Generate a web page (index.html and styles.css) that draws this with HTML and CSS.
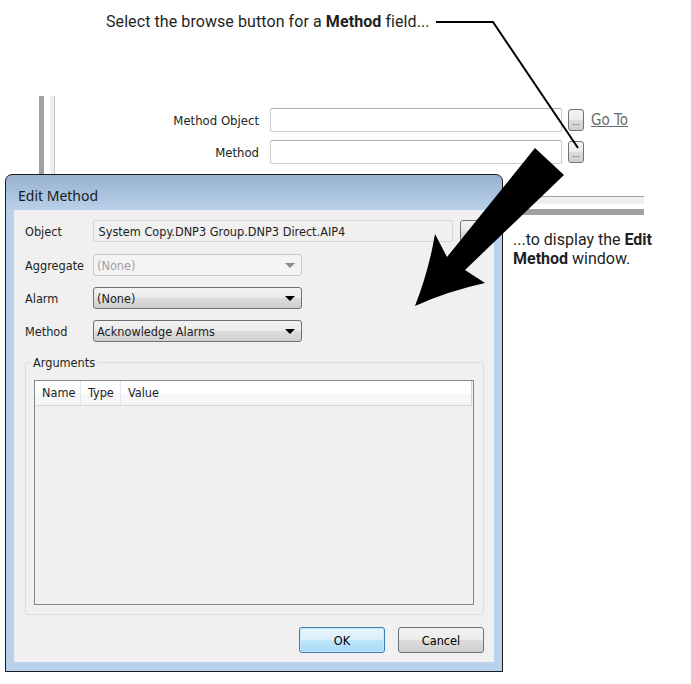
FILE: index.html
```html
<!DOCTYPE html>
<html lang="en">
<head>
    <meta charset="UTF-8">
    <meta name="viewport" content="width=device-width, initial-scale=1.0">
    <title>Edit Method</title>
    <link rel="stylesheet" href="styles.css">
</head>
<body>
    <p class="note note-top">Select the browse button for a <strong>Method</strong> field...</p>

    <!-- host window behind the dialog -->
    <div class="host">
        <div class="rail"></div>
        <div class="rail rail-light"></div>
        <div class="host-main">
            <div class="host-form">
                <label class="host-label">Method Object</label>
                <span class="host-input"></span>
                <button class="dots">...</button>
                <a class="goto" href="#">Go To</a>

                <label class="host-label">Method</label>
                <span class="host-input"></span>
                <button class="dots">...</button>
                <span></span>
            </div>
            <div class="host-bands"></div>
        </div>
    </div>

    <p class="note note-side">...to display the <strong>Edit</strong><br><strong>Method</strong> window.</p>

    <!-- Edit Method dialog -->
    <div class="dialog">
        <div class="dialog-title">Edit Method</div>
        <div class="dialog-body">
            <div class="row row-first">
                <span class="row-label">Object</span>
                <span class="textbox">System Copy.DNP3 Group.DNP3 Direct.AIP4</span>
                <button class="browse"></button>
            </div>
            <div class="row">
                <span class="row-label">Aggregate</span>
                <span class="combo combo-disabled">(None)</span>
            </div>
            <div class="row">
                <span class="row-label">Alarm</span>
                <span class="combo">(None)</span>
            </div>
            <div class="row">
                <span class="row-label">Method</span>
                <span class="combo">Acknowledge Alarms</span>
            </div>

            <fieldset class="group">
                <legend>Arguments</legend>
                <div class="list">
                    <div class="list-head">
                        <span class="col col-name">Name</span>
                        <span class="col col-type">Type</span>
                        <span class="col col-value">Value</span>
                    </div>
                </div>
            </fieldset>

            <div class="actions">
                <button class="btn btn-default">OK</button>
                <button class="btn">Cancel</button>
            </div>
        </div>
    </div>

    <!-- callout line and arrow -->
    <svg class="overlay" width="691" height="684" viewBox="0 0 691 684">
        <polyline points="436,22 493,22 578,148" fill="none" stroke="#000" stroke-width="2"/>
        <path d="M535 148 L564 175 L465 270 L485 283 Q448 291 415 306 Q429 270 435 234 L447 257 Z" fill="#000"/>
    </svg>
</body>
</html>
```

FILE: styles.css
```css
body {
    margin: 0;
    width: 691px;
    height: 684px;
    position: relative;
    overflow: hidden;
    background: #ffffff;
    font-family: Roboto, "Liberation Sans", sans-serif;
    color: #1f1f1f;
}

/* Annotations */
.note {
    margin: 0;
    font-size: 16px;
    line-height: 19px;
}

.note strong {
    font-weight: 700;
}

.note-top {
    padding: 12px 0 0 106px;
    letter-spacing: 0.08px;
}

.note-side {
    margin: 15px 0 0 513px;
    width: 160px;
}

.overlay {
    position: absolute;
    left: 0;
    top: 0;
    pointer-events: none;
}

/* Host window */
.host {
    display: flex;
    margin: 65px 0 0 39px;
    width: 605px;
}

.rail {
    width: 5px;
    margin-right: 6px;
    background: #a0a0a0;
}

.rail-light {
    width: 4px;
    margin-right: 0;
    background: #eeeeee;
    border-right: 1px solid #c8c8c8;
}

.host-main {
    flex: 1;
}

.host-form {
    display: grid;
    grid-template-columns: 215px 292px 22px auto;
    justify-content: start;
    grid-auto-rows: 24px;
    row-gap: 8px;
    align-items: center;
    justify-items: start;
    padding-top: 12px;
    margin-bottom: 32px;
    font-family: "DejaVu Sans Condensed", Tahoma, "Liberation Sans", sans-serif;
    font-size: 13px;
    color: #222;
}

.host-label {
    justify-self: stretch;
    text-align: right;
    padding-right: 11px;
}

.host-input {
    width: 292px;
    height: 24px;
    box-sizing: border-box;
    border: 1px solid #cccccc;
    border-top-color: #b0b0b0;
    border-radius: 2px;
    background: #fff;
}

.dots {
    width: 16px;
    height: 22px;
    margin-left: 6px;
    padding: 0 0 3px;
    display: flex;
    align-items: flex-end;
    justify-content: center;
    border: 1px solid #707070;
    border-radius: 3px;
    background: linear-gradient(#f2f2f2, #ebebeb 50%, #dddddd 50%, #cfcfcf);
    font-size: 9px;
    line-height: 9px;
    color: #4a2a8a;
}

.goto {
    margin-left: 7px;
    color: #6b6b6b;
    font-size: 15px;
}

.host-bands {
    height: 18px;
    border-top: 1px solid #a0a0a0;
    background: linear-gradient(#efefef 0, #efefef 7px, #fff 7px, #fff 12px, #a0a0a0 12px);
}

/* Dialog */
.dialog {
    position: absolute;
    left: 5px;
    top: 174px;
    width: 480px;
    padding: 0 8px 9px;
    border: 1px solid #1c1c1c;
    border-radius: 7px 7px 0 0;
    background: linear-gradient(#98b2cf, #b9d1ea 36px);
    font-family: "DejaVu Sans Condensed", Tahoma, "Liberation Sans", sans-serif;
    font-size: 12.6px;
    color: #1e1e1e;
}

.dialog-title {
    height: 35px;
    box-sizing: border-box;
    padding: 6px 0 0 4px;
    display: flex;
    align-items: center;
    font-family: "Noto Sans", "Open Sans", sans-serif;
    font-size: 14px;
    color: #1a1a1a;
}

.dialog-body {
    height: 452px;
    box-sizing: border-box;
    padding: 10px 10px 9px 11px;
    background: #f0f0f0;
    display: flex;
    flex-direction: column;
}

.row {
    display: flex;
    align-items: center;
    height: 22px;
    margin-bottom: 11px;
}

.row-first {
    margin-bottom: 12px;
}

.row:nth-child(4) {
    margin-bottom: 0;
}

.row-label {
    width: 68px;
}

.textbox {
    width: 363px;
    height: 22px;
    box-sizing: border-box;
    padding-left: 5px;
    display: flex;
    align-items: center;
    border: 1px solid #d6d6d6;
    border-radius: 2px;
    background: #f0f0f0;
}

.browse {
    width: 24px;
    height: 22px;
    margin-left: 7px;
    border: 1px solid #707070;
    border-radius: 3px;
    background: linear-gradient(#f2f2f2, #ebebeb 50%, #dddddd 50%, #cfcfcf);
}

.combo {
    width: 209px;
    height: 22px;
    box-sizing: border-box;
    padding: 0 6px 0 3px;
    display: flex;
    align-items: center;
    justify-content: space-between;
    border: 1px solid #707070;
    border-radius: 3px;
    background: linear-gradient(#f2f2f2, #ebebeb 50%, #dddddd 50%, #cfcfcf);
}

.combo::after {
    content: "";
    border-left: 5px solid transparent;
    border-right: 5px solid transparent;
    border-top: 5px solid #000;
}

.combo-disabled {
    color: #a0a0a0;
    border-color: #c9c9c9;
    background: #f4f4f4;
}

.combo-disabled::after {
    border-top-color: #8a8a8a;
}

.group {
    margin: 13px 0 0;
    padding: 10px 9px 9px 8px;
    min-width: 0;
    border: 1px solid #d5dfe5;
    border-radius: 3px;
}

.group legend {
    margin-left: -3px;
    padding: 0 2px;
    line-height: 15px;
}

.list {
    height: 225px;
    box-sizing: border-box;
    border: 1px solid #828790;
    background: #f0f0f0;
}

.list-head {
    display: flex;
    height: 24px;
    border-bottom: 1px solid #d5d5d5;
    background: linear-gradient(#ffffff, #ffffff 50%, #f7f8f9 50%, #f3f4f6);
    margin-right: 1px;
    border-right: 1px solid #d5d5d5;
}

.col {
    padding-left: 7px;
    line-height: 24px;
    box-sizing: border-box;
    border-right: 1px solid #e3e8ee;
}

.col-name {
    width: 46px;
}

.col-type {
    width: 40px;
}

.col-value {
    flex: 1;
    border-right: none;
}

.actions {
    display: flex;
    justify-content: flex-end;
    gap: 13px;
    margin-top: 12px;
}

.btn {
    width: 86px;
    height: 26px;
    border: 1px solid #707070;
    border-radius: 3px;
    background: linear-gradient(#f2f2f2, #ebebeb 50%, #dddddd 50%, #cfcfcf);
    font: inherit;
    color: #000;
}

.btn-default {
    border-color: #3c7fb1;
    background: linear-gradient(#eaf6fd, #d9f0fc 50%, #bee6fd 50%, #a7d9f5);
    box-shadow: inset 0 0 0 1px #c6e8fa;
}
```
